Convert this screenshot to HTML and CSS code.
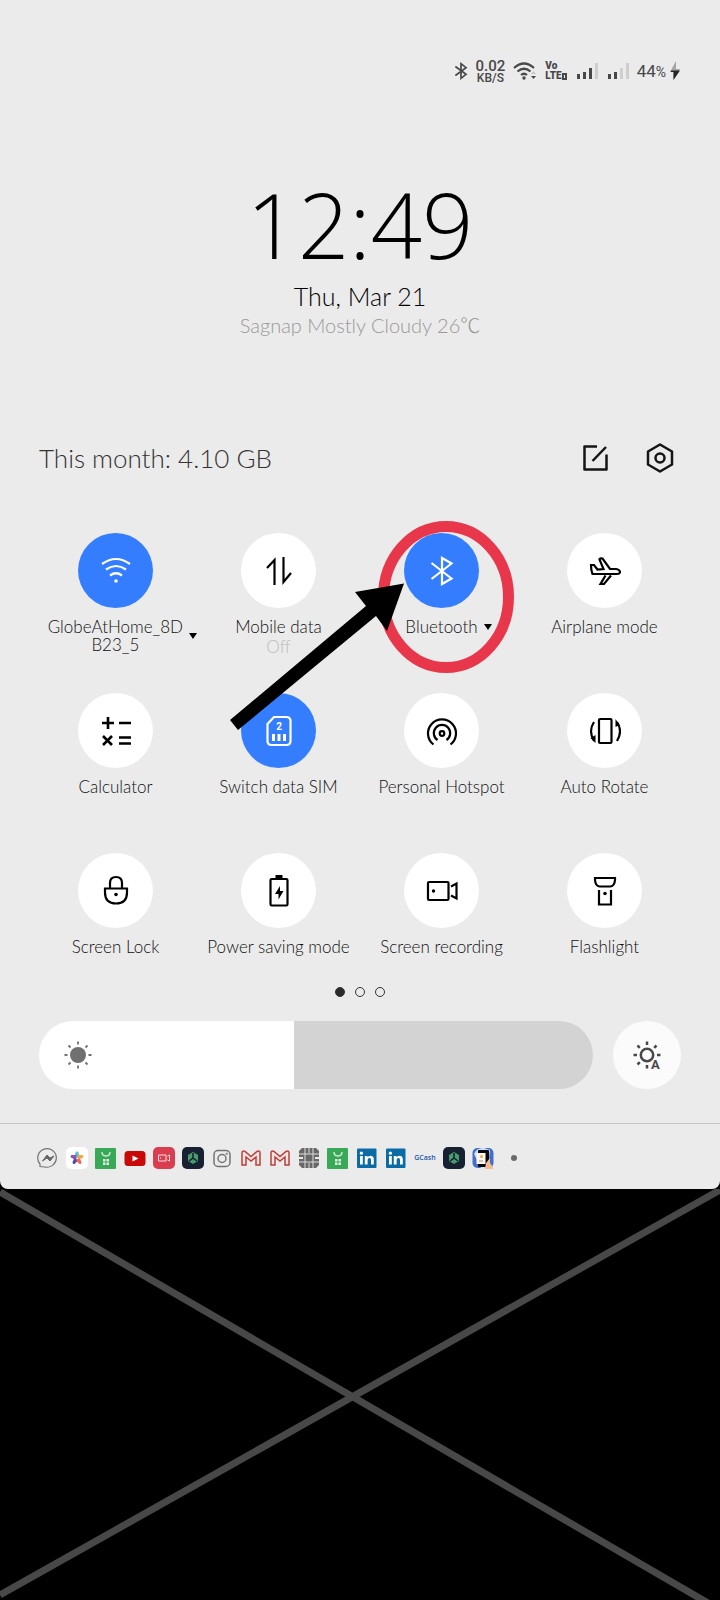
FILE: index.html
```html
<!DOCTYPE html>
<html lang="en">
<head>
<meta charset="utf-8">
<meta name="viewport" content="width=device-width, initial-scale=1">
<title>Quick settings</title>
<link rel="stylesheet" href="styles.css">
</head>
<body>
<svg class="defs" aria-hidden="true">
  <symbol id="bt" viewBox="0 0 24 32"><path d="M2 8 L21 22 L12 29 V3 L21 10 L2 24"/></symbol>
  <symbol id="mail" viewBox="0 0 22 22"><path d="M2 18V6q0-3 3-1.500l6 5 6-5q3-1.500 3 1.500v12h-4v-8l-5 4-5-4v8z" fill="#f4e4e2" stroke="#b9403b" stroke-width="1.500"/></symbol>
  <symbol id="shop" viewBox="0 0 22 22"><rect x="0" y="1" width="21" height="21" rx="1" fill="#38a956"/><path d="M7 5q0 4 4 4t4-4" fill="none" stroke="#dff5df" stroke-width="1.300"/><path d="M8 12h2.500v2.500H8zm3.500 0H14v2.500h-2.500zM8 15.500h2.500V18H8zm3.500 0H14V18h-2.500z" fill="#e8f8e8"/></symbol>
  <symbol id="cube" viewBox="0 0 22 22"><rect x="0" y="0" width="22" height="22" rx="5" fill="#172131"/><path d="M11 5l5 3v6l-5 3-5-3V8z" fill="#4a9a70"/><path d="M11 6v5l-4 3m4-3l4 3" fill="none" stroke="#10202a" stroke-width="1.500"/></symbol>
  <symbol id="linkedin" viewBox="0 0 22 22"><rect x="1" y="1.500" width="19.500" height="19.500" rx="1" fill="#0b6ca5"/><path d="M4 9h2.800v8.500H4z" fill="#fff"/><circle cx="5.400" cy="6.200" r="1.600" fill="#fff"/><path d="M8.800 9h2.700v1.300q1-1.600 3-1.600 3.300 0 3.300 3.700v5.100H15v-4.700q0-1.900-1.600-1.900-1.800 0-1.800 2.100v4.500H8.800z" fill="#fff"/></symbol>
</svg>

<main class="panel">
  <header class="status">
    <svg class="s-bt" viewBox="0 0 24 32"><use href="#bt"/></svg>
    <div class="speed"><b>0.02</b><span>KB/S</span></div>
    <svg class="s-wifi" viewBox="0 0 24 20" aria-label="Wi-Fi"><path d="M1 7q10-9 20 0M4.500 10.500q6.500-5.500 13 0M8 14q3-2.500 6 0" fill="none" stroke="#484848" stroke-width="2.200"/><circle cx="11" cy="17" r="1.700" fill="#484848"/><path d="M18 13l2.500-3 2.500 3z" fill="#c4c4c4"/><path d="M18 15l2.500 3 2.500-3z" fill="#484848"/></svg>
    <div class="volte"><span>Vo</span><span>LTE<i></i></span></div>
    <svg class="bars" viewBox="0 0 22 18" aria-label="Signal"><path d="M1 12h3v5H1zM7 10h3v7H7zM13 6h3v11h-3z" fill="#484848"/><path d="M19 1h3v16h-3z" fill="#cfcfcf"/></svg>
    <svg class="bars" viewBox="0 0 22 18" aria-label="Signal"><path d="M1 12h3v5H1zM7 10h3v7H7z" fill="#484848"/><path d="M13 6h3v11h-3zM19 1h3v16h-3z" fill="#cfcfcf"/></svg>
    <div class="battery"><span>44<small>%</small></span>
      <svg class="bolt" viewBox="0 0 12 20"><path d="M7 0v8h4L4.500 19v-8H1z" fill="#a6a6a6"/><path d="M2.500 9.500h8.500L4.500 19v-8H1.500z" fill="#252525"/></svg>
    </div>
  </header>

  <section class="clock">
    <time class="time">12:49</time>
    <div class="date">Thu, Mar 21</div>
    <div class="weather">Sagnap Mostly Cloudy 26℃</div>
  </section>

  <section class="usage">
    <span class="usage-text">This month: 4.10 GB</span>
    <button class="plain" aria-label="Edit"><svg viewBox="0 0 30 30"><path d="M17 3.500H4.500v23h22V11.500M12.500 18L26 4" stroke-linejoin="round"/></svg></button>
    <button class="plain" aria-label="Settings"><svg viewBox="0 0 30 30"><path d="M15 1.500L27 8.500v13L15 28.500 3 21.500v-13z" stroke-linejoin="round"/><circle cx="15" cy="15" r="4.500"/></svg></button>
  </section>

  <section class="tiles">
    <button class="tile">
      <span class="disc on"><svg viewBox="0 0 32 32"><path d="M2 9Q16-1 30 9M6 14.500q10-7 20 0M10 20.500q6-4.500 12 0"/><circle cx="16" cy="26" r="1.800" class="dot"/></svg></span>
      <span class="label"><span class="name">GlobeAtHome_8D<br>B23_5</span><i class="caret"></i></span>
    </button>
    <button class="tile">
      <span class="disc"><svg viewBox="0 0 32 32"><path d="M4 13L11.500 5V30M20.500 2V27L28 18"/></svg></span>
      <span class="label"><span class="name">Mobile data<span class="state">Off</span></span></span>
    </button>
    <button class="tile">
      <span class="disc on"><svg viewBox="0 0 32 32"><path d="M5.500 8L25.500 23.500 16 29V3L25.500 8.500 5.500 24"/></svg></span>
      <span class="label"><span class="name">Bluetooth</span><i class="caret"></i></span>
    </button>
    <button class="tile">
      <span class="disc"><svg viewBox="0 0 32 32"><path d="M2 10h3l3.500 4.500 6-.500-4-9.500q-.300-1.500 3-1l7.500 10.500h6q4 .700 4 3.500-.500 1.500-3 1.500H3.500Q2 15 2 10zM16.500 20.500l-5 8.500h3.500L22 20.500"/></svg></span>
      <span class="label"><span class="name">Airplane mode</span></span>
    </button>

    <button class="tile">
      <span class="disc"><svg viewBox="0 0 32 32"><path d="M2 8h12M8 2v12M19 8h12M3 21l9 9M12 21l-9 9M19 22.500h12M19 28.500h12" stroke-width="2.600"/></svg></span>
      <span class="label"><span class="name">Calculator</span></span>
    </button>
    <button class="tile">
      <span class="disc on"><svg viewBox="0 0 32 32"><path d="M11 2h12q4.500 0 4.500 4v20q0 4-4 4h-15q-4 0-4-4V9z"/><path d="M10.500 19v7M16 19v7M21.500 19v7" class="thick"/><text x="16" y="15" class="sim">2</text></svg></span>
      <span class="label"><span class="name">Switch data SIM</span></span>
    </button>
    <button class="tile">
      <span class="disc"><svg viewBox="0 0 32 32"><path d="M7.500 29.500a14 14 0 1 1 17 0M11.500 25a8.200 8.200 0 1 1 9 0"/><circle cx="16" cy="18.500" r="2.300"/></svg></span>
      <span class="label"><span class="name">Personal Hotspot</span></span>
    </button>
    <button class="tile">
      <span class="disc"><svg viewBox="0 0 32 32"><rect x="10" y="4" width="12.500" height="24" rx="1"/><path d="M5 7q-6 9 0 19M28 26q6-10 0-19"/><path d="M6.500 20v8L1.500 23zM26.500 4v8l4-2z" class="dot"/></svg></span>
      <span class="label"><span class="name">Auto Rotate</span></span>
    </button>

    <button class="tile">
      <span class="disc"><svg viewBox="0 0 32 32"><path d="M5 13.500h22v4q0 11-11 11t-11-11zM10 13V8q0-6 6-6t6 6v5"/><circle cx="16" cy="19.500" r="1.800" class="dot"/></svg></span>
      <span class="label"><span class="name">Screen Lock</span></span>
    </button>
    <button class="tile">
      <span class="disc"><svg viewBox="0 0 32 32"><rect x="7.500" y="4" width="17" height="26.500" rx="1.200"/><path d="M12.500 1.500h7" class="thick"/><path d="M17 11l-5 8h3.500v5.500l5-8.500H17z" class="dot"/></svg></span>
      <span class="label"><span class="name">Power saving mode</span></span>
    </button>
    <button class="tile">
      <span class="disc"><svg viewBox="0 0 32 32"><rect x="2" y="7" width="20.500" height="18" rx="1"/><path d="M25 11.500L30.500 8.500V23.500L25 20.500"/><circle cx="7.500" cy="16" r="1.700" class="dot"/></svg></span>
      <span class="label"><span class="name">Screen recording</span></span>
    </button>
    <button class="tile">
      <span class="disc"><svg viewBox="0 0 32 32"><path d="M6 3h20v2q-.500 6-4.500 6.500h-11Q6.500 11 6 5zM10 15v14.500h12V15"/><circle cx="16" cy="18.500" r="1.800" class="dot"/></svg></span>
      <span class="label"><span class="name">Flashlight</span></span>
    </button>

    <svg class="markup" viewBox="0 0 300 220" aria-hidden="true">
      <ellipse cx="223" cy="84" rx="62.500" ry="70.500" fill="none" stroke="#e8374a" stroke-width="11"/>
      <path d="M7 207L143 93 132 79 181 70.500 164 118 153 103 15 217z" fill="#000"/>
    </svg>
  </section>

  <nav class="pages" aria-label="Pages"><i class="current"></i><i></i><i></i></nav>

  <section class="brightness">
    <div class="slider">
      <input type="range" min="0" max="100" value="46" aria-label="Brightness">
      <svg viewBox="0 0 28 28"><circle cx="14" cy="14" r="8" fill="#707070"/><path d="M14 .5v3M14 24.500v3M.5 14h3M24.500 14h3M4.500 4.500l2 2M21.500 21.500l2 2M4.500 23.500l2-2M21.500 6.500l2-2" stroke="#707070" stroke-width="1.800"/></svg>
    </div>
    <button class="auto" aria-label="Automatic brightness"><svg viewBox="0 0 28 28"><circle cx="14" cy="14" r="6.200" fill="none" stroke="#484848" stroke-width="2.500"/><path d="M14 .5v3.500M14 24v3.500M.5 14H4M24 14h3.500M4.500 4.500l2.300 2.300M4.500 23.500l2.300-2.300M21.200 6.800l2.300-2.300" stroke="#484848" stroke-width="2.500"/><text x="18" y="27.500">A</text></svg></button>
  </section>

  <footer class="apps">
    <svg viewBox="0 0 22 22"><path d="M3 19.500V17A9.300 9.300 0 1 1 8 20z" fill="none" stroke="#747474" stroke-width="1.200"/><path d="M5.500 14L10 8l3 3 4-2-4 5-3-3z" fill="#666" stroke="#666"/></svg>
    <svg viewBox="0 0 22 22"><rect width="22" height="22" rx="5" fill="#fff"/><g stroke-width="3" stroke-linejoin="round"><path d="M11 6l1 3h-2z" fill="#64b7d9" stroke="#64b7d9"/><path d="M6 9.500l3 0 0 1.500z" fill="#8a54bd" stroke="#8a54bd"/><path d="M16 9.500l-3 0 0 1.500z" fill="#efac3d" stroke="#efac3d"/><path d="M8 15.500l1-2.500 1 .5z" fill="#5648ac" stroke="#5648ac"/><path d="M14 15.500l-1-2.500-1 .5z" fill="#ee6958" stroke="#ee6958"/></g></svg>
    <svg viewBox="0 0 22 22"><use href="#shop"/></svg>
    <svg viewBox="0 0 22 22"><rect x=".5" y="4" width="21" height="15" rx="3.500" fill="#c90808"/><path d="M8.500 8.500l6 3-6 3z" fill="#fff"/></svg>
    <svg viewBox="0 0 22 22"><rect width="22" height="22" rx="5" fill="#d93d4f"/><path d="M5.500 8h7.500v6H5.500zM14.500 9l2-1v6l-2-1M7.500 10.500v1" fill="none" stroke="#fbdde0"/></svg>
    <svg viewBox="0 0 22 22"><use href="#cube"/></svg>
    <svg viewBox="0 0 22 22" fill="none" stroke="#747474" stroke-width="1.500"><rect x="3" y="3.500" width="16" height="16" rx="4"/><circle cx="11" cy="11.500" r="4"/><circle cx="15.700" cy="6.800" r=".4"/></svg>
    <svg viewBox="0 0 22 22"><use href="#mail"/></svg>
    <svg viewBox="0 0 22 22"><use href="#mail"/></svg>
    <svg viewBox="0 0 22 22"><path d="M4 1h14l3 3v14l-3 3H4l-3-3V4z" fill="#686868"/><path d="M1 7h20M1 15h20M7 1v20M15 1v20M11 0v6M11 16v6" stroke="#dcdcdc" fill="none"/><circle cx="11" cy="11" r="3" fill="#686868"/><path d="M0 11h5M17 11h5" stroke="#eaeaea" stroke-width="2"/></svg>
    <svg viewBox="0 0 22 22"><use href="#shop"/></svg>
    <svg viewBox="0 0 22 22"><use href="#linkedin"/></svg>
    <svg viewBox="0 0 22 22"><use href="#linkedin"/></svg>
    <span class="gcash">GCash</span>
    <svg viewBox="0 0 22 22"><use href="#cube"/></svg>
    <svg viewBox="0 0 22 22"><rect x=".5" y="1" width="21" height="20" rx="5" fill="#426fc9"/><path d="M2 7Q5 0 12 1l6 2-2 18H9z" fill="#cfe0fa"/><rect x="6" y="3" width="11" height="17" rx="1" fill="#07090d"/><rect x="4.500" y="6" width="9" height="11" fill="#fff7e9"/><circle cx="9.500" cy="9.500" r="1.500" fill="#e7ac64"/><path d="M7 14h4" stroke="#999"/><path d="M13 22l1-6 4-5v5l3 4v2z" fill="#f3bd91"/></svg>
    <i class="more"></i>
  </footer>
</main>

<section class="blank" aria-hidden="true">
  <svg viewBox="0 0 720 411" preserveAspectRatio="none"><path d="M0 3L720 421M720 1L0 406"/></svg>
</section>
</body>
</html>
```
FILE: styles.css
```css
* { box-sizing: border-box; }

body {
  margin: 0;
  min-height: 100vh;
  display: flex;
  flex-direction: column;
  background: #000;
  color: #111;
  font-family: Lato, "Open Sans", "Noto Sans CJK SC", sans-serif;
  font-weight: 300;
}

button {
  padding: 0;
  border: 0;
  background: none;
  color: inherit;
  font: inherit;
}

svg { display: block; flex: none; }
i { display: block; }
.defs { position: absolute; width: 0; height: 0; }

.panel {
  background: #ebebeb;
  border-radius: 0 0 8px 8px;
}

.status {
  display: flex;
  justify-content: flex-end;
  align-items: center;
  height: 84px;
  padding: 58px 39px 0 0;
  gap: 8px;
  color: #484848;
  font-family: Roboto, sans-serif;
}
.s-bt { width: 14px; height: 18px; fill: none; stroke: #484848; stroke-width: 3; }
.s-wifi { width: 24px; height: 20px; }
.speed { display: flex; flex-direction: column; align-items: center; font-size: 12px; line-height: 10px; font-weight: 500; }
.speed b { font-size: 15px; line-height: 14px; font-weight: 500; }
.volte { display: flex; flex-direction: column; font-size: 10px; line-height: 10px; font-weight: 900; }
.volte span { display: flex; align-items: center; }
.volte i { width: 5px; height: 7px; border: 2px solid #484848; }
.bars { width: 22px; height: 18px; margin-left: 1px; }
.battery { display: flex; align-items: center; gap: 3px; font-size: 17px; line-height: 20px; font-weight: 400; }
.battery small { font-size: 14px; }
.bolt { width: 12px; height: 20px; }

.clock { padding-top: 96px; text-align: center; }
.time { display: block; color: #000; font-family: "Open Sans", sans-serif; font-size: 90px; line-height: 88px; }
.date { margin-top: 12px; color: #000; font-size: 25px; line-height: 32px; }
.weather { color: #999; font-size: 20px; line-height: 26px; }

.usage {
  display: flex;
  align-items: center;
  height: 32px;
  margin-top: 104px;
  padding: 0 45px 0 39px;
  gap: 35px;
}
.usage-text { flex: 1; color: #333; font-size: 26px; line-height: 32px; }
.plain svg { width: 30px; height: 30px; fill: none; stroke: #151515; stroke-width: 2.5; }

.tiles {
  position: relative;
  display: grid;
  grid-template-columns: repeat(4, 1fr);
  grid-auto-rows: 115px;
  row-gap: 45px;
  margin: 59px 34px 0;
}
.tile { display: flex; flex-direction: column; align-items: center; gap: 10px; }
.disc {
  display: grid;
  place-items: center;
  flex: none;
  width: 75px;
  height: 75px;
  border-radius: 50%;
  background: #fff;
  color: #000;
}
.disc.on { background: #347dff; color: #fff; }
.disc svg { width: 32px; height: 32px; fill: none; stroke: currentColor; stroke-width: 2.2; }
.disc .dot { fill: currentColor; stroke: none; }
.disc .thick { stroke-width: 3; }
.disc .sim { fill: currentColor; stroke: none; font: 700 10px Roboto, sans-serif; text-anchor: middle; }
.label {
  display: grid;
  grid-template-columns: 1fr auto 1fr;
  align-items: center;
  column-gap: 6px;
  width: 100%;
  font-size: 17px;
  line-height: 18px;
}
.name { grid-column: 2; white-space: nowrap; }
.state { display: block; padding-top: 2px; color: #bbb; }
.caret { border: solid transparent; border-width: 6px 4px 0; border-top-color: #000; justify-self: start; }
.markup { position: absolute; left: 29%; top: -20px; width: 300px; height: 220px; pointer-events: none; }

.pages { display: flex; justify-content: center; gap: 10px; margin-top: 19px; }
.pages i { width: 10px; height: 10px; border: 1px solid #333; border-radius: 50%; }
.pages .current { background: #2b2b2b; }

.brightness { display: flex; gap: 20px; margin-top: 24px; padding: 0 39px; }
.slider { position: relative; flex: 1; }
.slider input {
  appearance: none;
  display: block;
  width: 100%;
  height: 68px;
  margin: 0;
  border-radius: 34px;
  background: linear-gradient(to right, #fff 46%, #d3d3d3 46%);
}
.slider input::-webkit-slider-thumb { appearance: none; width: 1px; height: 68px; background: transparent; }
.slider svg { position: absolute; left: 25px; top: 20px; width: 28px; height: 28px; pointer-events: none; }
.auto { display: grid; place-items: center; width: 68px; height: 68px; border-radius: 50%; background: #fbfbfb; }
.auto svg { width: 28px; height: 28px; overflow: visible; }
.auto text { fill: #484848; stroke: #fbfbfb; stroke-width: 2px; paint-order: stroke; font: 700 13px Roboto, sans-serif; }

.apps {
  display: flex;
  align-items: center;
  gap: 7px;
  height: 66px;
  margin-top: 34px;
  padding: 3px 37px 0;
  border-top: 1px solid #c4c4c4;
}
.apps svg { width: 22px; height: 22px; }
.gcash { width: 22px; color: #1c55ad; font: 600 7px/22px "Open Sans", sans-serif; text-align: center; }
.more { width: 6px; height: 6px; margin-left: 10px; border-radius: 50%; background: #6a6a6a; }

.blank { display: flex; flex: 1; min-height: 300px; }
.blank svg { width: 100%; height: auto; flex: 1; fill: none; stroke: #484848; stroke-width: 7; }
```
